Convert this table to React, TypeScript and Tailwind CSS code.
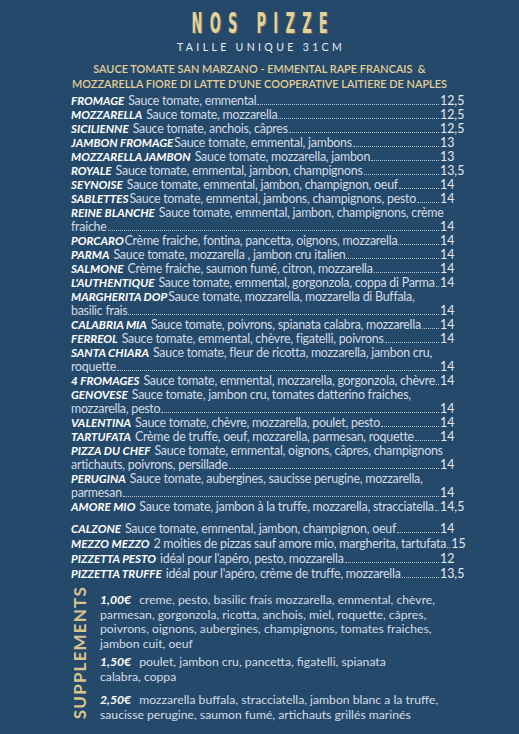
const pizzas = [
  { name: "FROMAGE", sp: true, lines: ["Sauce tomate, emmental"], price: "12,5" },
  { name: "MOZZARELLA", sp: true, lines: ["Sauce tomate, mozzarella"], price: "12,5" },
  { name: "SICILIENNE", sp: true, lines: ["Sauce tomate, anchois, câpres"], price: "12,5" },
  { name: "JAMBON FROMAGE", sp: false, lines: ["Sauce tomate, emmental, jambons"], price: "13" },
  { name: "MOZZARELLA JAMBON", sp: true, lines: ["Sauce tomate, mozzarella, jambon"], price: "13" },
  { name: "ROYALE", sp: true, lines: ["Sauce tomate, emmental, jambon, champignons"], price: "13,5" },
  { name: "SEYNOISE", sp: true, lines: ["Sauce tomate, emmental, jambon, champignon, oeuf"], price: "14" },
  { name: "SABLETTES", sp: false, lines: ["Sauce tomate, emmental, jambons, champignons, pesto"], price: "14" },
  { name: "REINE BLANCHE", sp: true, lines: ["Sauce tomate, emmental, jambon, champignons, crème", "fraiche"], price: "14" },
  { name: "PORCARO", sp: false, lines: ["Crème fraiche, fontina, pancetta, oignons, mozzarella"], price: "14" },
  { name: "PARMA", sp: true, lines: ["Sauce tomate, mozzarella , jambon cru italien"], price: "14" },
  { name: "SALMONE", sp: true, lines: ["Crème fraiche, saumon fumé, citron, mozzarella"], price: "14" },
  { name: "L'AUTHENTIQUE", sp: true, lines: ["Sauce tomate, emmental, gorgonzola, coppa di Parma"], price: "14" },
  { name: "MARGHERITA DOP", sp: false, lines: ["Sauce tomate, mozzarella, mozzarella di Buffala,", "basilic frais"], price: "14" },
  { name: "CALABRIA MIA", sp: true, lines: ["Sauce tomate, poivrons, spianata calabra, mozzarella"], price: "14" },
  { name: "FERREOL", sp: true, lines: ["Sauce tomate, emmental, chèvre, figatelli, poivrons"], price: "14" },
  { name: "SANTA CHIARA", sp: true, lines: ["Sauce tomate, fleur de ricotta, mozzarella, jambon cru,", "roquette"], price: "14" },
  { name: "4 FROMAGES", sp: true, lines: ["Sauce tomate, emmental, mozzarella, gorgonzola, chèvre"], price: "14" },
  { name: "GENOVESE", sp: true, lines: ["Sauce tomate, jambon cru, tomates datterino fraiches,", "mozzarella, pesto"], price: "14" },
  { name: "VALENTINA", sp: true, lines: ["Sauce tomate, chèvre, mozzarella, poulet, pesto"], price: "14" },
  { name: "TARTUFATA", sp: true, lines: ["Crème de truffe, oeuf, mozzarella, parmesan, roquette"], price: "14" },
  { name: "PIZZA DU CHEF", sp: true, lines: ["Sauce tomate, emmental, oignons, câpres, champignons", "artichauts, poivrons, persillade"], price: "14" },
  { name: "PERUGINA", sp: true, lines: ["Sauce tomate, aubergines, saucisse perugine, mozzarella,", "parmesan"], price: "14" },
  { name: "AMORE MIO", sp: true, lines: ["Sauce tomate, jambon à la truffe, mozzarella, stracciatella"], price: "14,5" },
];

const extras = [
  { name: "CALZONE", sp: true, lines: ["Sauce tomate, emmental, jambon, champignon, oeuf"], price: "14" },
  { name: "MEZZO MEZZO", sp: true, lines: ["2 moities de pizzas sauf amore mio, margherita, tartufata"], price: "15" },
  { name: "PIZZETTA PESTO", sp: true, lines: ["idéal pour l'apéro, pesto, mozzarella"], price: "12" },
  { name: "PIZZETTA TRUFFE", sp: true, lines: ["idéal pour l'apéro, crème de truffe, mozzarella"], price: "13,5" },
];

const supplements = [
  {
    price: "1,00€",
    gap: "mb-[4px]",
    text: ["creme, pesto, basilic frais mozzarella, emmental, chèvre,", "parmesan, gorgonzola, ricotta, anchois, miel, roquette, câpres,", "poivrons, oignons, aubergines, champignons, tomates fraiches,", "jambon cuit, oeuf"],
  },
  { price: "1,50€", gap: "mb-[9px]", text: ["poulet, jambon cru, pancetta, figatelli, spianata", "calabra, coppa"] },
  {
    price: "2,50€",
    gap: "",
    text: ["mozzarella buffala, stracciatella, jambon blanc a la truffe,", "saucisse perugine, saumon fumé, artichauts grillés marinés"],
  },
];

type Item = { name: string; sp: boolean; lines: string[]; price: string };

function Leader() {
  return <span className="mx-[1px] mb-[3px] min-w-[3px] flex-1 self-end border-b border-dotted border-[#b9c6d4]" />;
}

function MenuItem({ item, rowH }: { item: Item; rowH: string }) {
  const last = item.lines.length - 1;
  return (
    <div>
      {item.lines.map((line, i) => (
        <div key={i} className={`flex items-center whitespace-nowrap leading-[14px] ${rowH}`}>
          {i === 0 && (
            <span className={`text-[11.6px] font-bold italic text-white ${item.sp ? "mr-[4px]" : "mr-[1px]"}`}>
              {item.name}
            </span>
          )}
          <span className="shrink-0 tracking-[-0.02em] text-[#d3dce7]">{line}</span>
          {i === last ? (
            <>
              <Leader />
              <span className="w-[16px] shrink-0 overflow-visible text-[#e3e9f0]">{item.price}</span>
            </>
          ) : null}
        </div>
      ))}
    </div>
  );
}

export default function App() {
  return (
    <div className="min-h-[734px] w-full bg-[#25496b] pb-4 text-[12.4px] [font-family:Lato,'Noto_Sans',sans-serif]">
      <header className="flex flex-col items-center pt-[8px] text-center">
        <h1 className="inline-block scale-x-[0.5] pl-[0.5em] text-[29px] font-bold leading-[30px] tracking-[0.5em] text-[#e4d29f] [font-family:'DejaVu_Sans_Condensed','DejaVu_Sans',sans-serif] [text-shadow:2px_1px_0_#75694c]">
          NOS PIZZE
        </h1>
        <p className="mt-[2px] pl-[0.3em] text-[10.5px] leading-[14px] tracking-[0.32em] text-[#e6edf4]">TAILLE UNIQUE 31CM</p>
        <div className="mt-[7px] text-[10.9px] font-semibold leading-[15px] text-[#e3cf96]">
          <p>SAUCE TOMATE SAN MARZANO - EMMENTAL RAPE FRANCAIS &nbsp;&amp;</p>
          <p>MOZZARELLA FIORE DI LATTE D'UNE COOPERATIVE LAITIERE DE NAPLES</p>
        </div>
      </header>

      <main className="ml-[71px] mt-[3px] w-[385px]">
        <section>
          {pizzas.map((p) => (
            <MenuItem key={p.name} item={p} rowH="h-[14px]" />
          ))}
        </section>
        <section className="mt-[7px]">
          {extras.map((p) => (
            <MenuItem key={p.name} item={p} rowH="h-[15px]" />
          ))}
        </section>

        <section className="mt-[12px] flex gap-[12px]">
          <div className="flex w-[17px] items-center justify-center">
            <span className="-mt-[10px] rotate-180 text-[17px] font-bold leading-[17px] tracking-[0.07em] text-[#d8c48e] [writing-mode:vertical-rl]">
              SUPPLEMENTS
            </span>
          </div>
          <div className="flex flex-col text-[12.2px] leading-[14.5px]">
            {supplements.map((s) => (
              <div key={s.price} className={s.gap}>
                {s.text.map((t, i) => (
                  <p key={i} className="whitespace-nowrap text-[#d3dce7]">
                    {i === 0 && <span className="mr-[8px] font-bold italic text-white">{s.price}</span>}
                    {t}
                  </p>
                ))}
              </div>
            ))}
          </div>
        </section>
      </main>
    </div>
  );
}
